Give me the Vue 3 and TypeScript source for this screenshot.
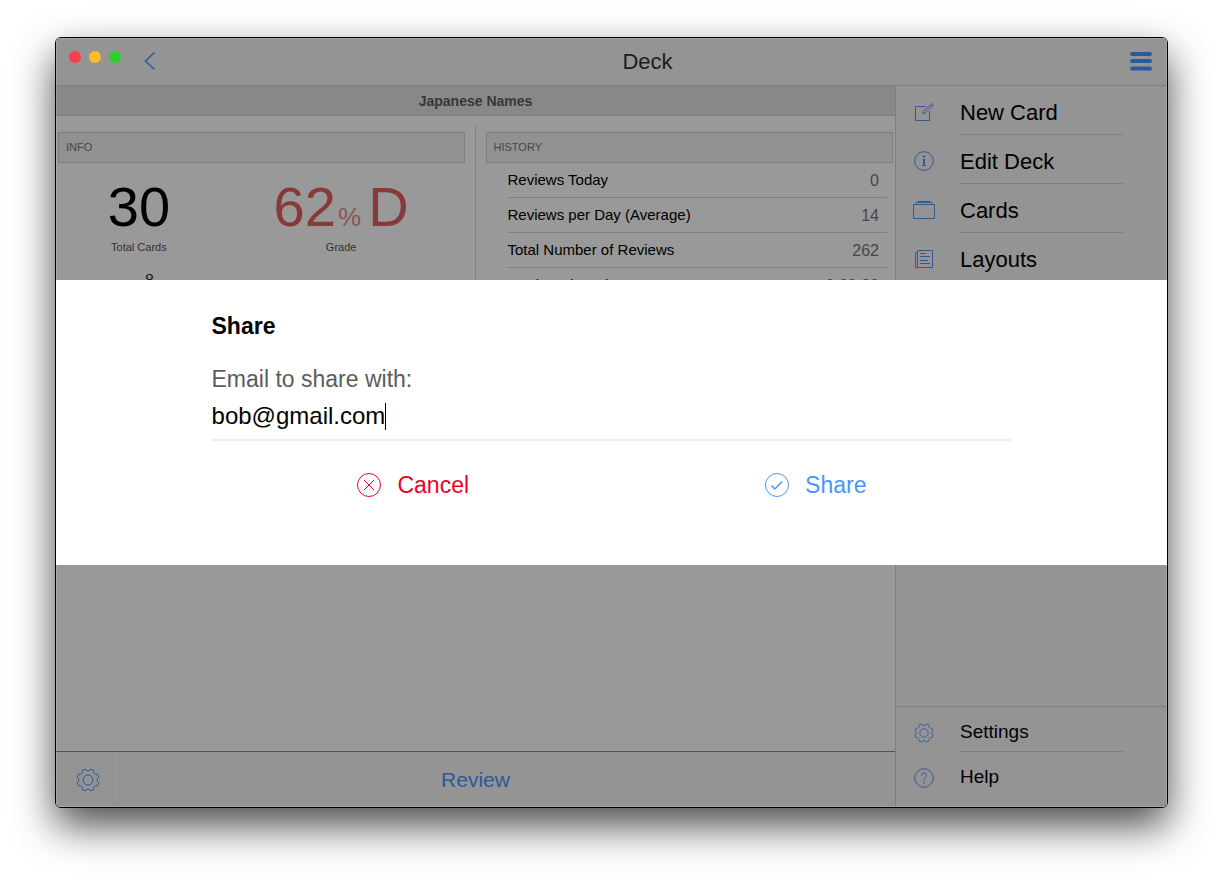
<script setup lang="ts">
import { ref } from 'vue'

interface Stat {
  label: string
  value: string
}

const email = ref('bob@gmail.com')

const history: Stat[] = [
  { label: 'Reviews Today', value: '0' },
  { label: 'Reviews per Day (Average)', value: '14' },
  { label: 'Total Number of Reviews', value: '262' },
  { label: 'Total Review Time', value: '0:28:38' },
]

const actions = [
  { id: 'new', label: 'New Card' },
  { id: 'edit', label: 'Edit Deck' },
  { id: 'cards', label: 'Cards' },
  { id: 'layouts', label: 'Layouts' },
]

const gearPath = (() => {
  const points: string[] = []
  const teeth = 8
  for (let i = 0; i < teeth; i++) {
    const base = ((i + 0.5) * 2 * Math.PI) / teeth - Math.PI / 2
    const at = (r: number, offset: number) =>
      `${(12 + r * Math.cos(base + offset)).toFixed(2)} ${(12 + r * Math.sin(base + offset)).toFixed(2)}`
    const lead = i === 0 ? 'M' : 'L'
    points.push(`${lead}${at(9.4, -0.25)} L${at(11.2, -0.17)}`)
    points.push(`L${at(11.2, 0.17)} L${at(9.4, 0.25)}`)
    points.push(`Q${at(8.6, 0.39)} ${at(9.4, 0.53)}`)
  }
  return points.join(' ') + 'Z'
})()
</script>

<template>
  <div class="page">
    <div class="window">
      <header class="toolbar">
        <div class="toolbar-left">
          <button class="icon-button" aria-label="Back">
            <svg width="12" height="20" viewBox="0 0 12 20">
              <path d="M10.5 1.5 1.5 10l9 8.500" />
            </svg>
          </button>
        </div>
        <h1>Deck</h1>
        <button class="icon-button menu" aria-label="Menu">
          <svg width="22" height="20" viewBox="0 0 22 20">
            <path d="M2 3h18M2 10h18M2 17.500h18" />
          </svg>
        </button>
      </header>

      <div class="body">
        <main>
          <h2 class="deck-name">Japanese Names</h2>
          <div class="columns">
            <section class="info">
              <h3>INFO</h3>
              <div class="figures">
                <div class="figure">
                  <span class="big">30</span>
                  <span class="caption">Total Cards</span>
                </div>
                <div class="figure">
                  <span class="big grade">62<small>% </small>D</span>
                  <span class="caption">Grade</span>
                </div>
              </div>
              <div class="chart-mark">8</div>
            </section>
            <section class="history">
              <h3>HISTORY</h3>
              <dl>
                <div v-for="row in history" :key="row.label" class="stat">
                  <dt>{{ row.label }}</dt>
                  <dd>{{ row.value }}</dd>
                </div>
              </dl>
            </section>
          </div>
          <footer class="bottom-bar">
            <button class="gear" aria-label="Deck settings">
              <svg width="24" height="24" viewBox="0 0 24 24">
                <path :d="gearPath" />
                <circle cx="12" cy="12" r="5" />
              </svg>
            </button>
            <button class="review">Review</button>
          </footer>
        </main>

        <aside>
          <nav>
            <button v-for="item in actions" :key="item.id" class="item">
              <span class="item-icon">
                <svg v-if="item.id === 'new'" width="22" height="22" viewBox="0 0 22 22">
                  <path d="M13 5.500H2.500v14h14V10" />
                  <path d="M9.500 13l1-2.700L19 2.500l1.500 1.500L12 12zM17.500 4 19 5.500" />
                </svg>
                <svg v-else-if="item.id === 'edit'" width="22" height="22" viewBox="0 0 22 22">
                  <circle cx="11" cy="11" r="9.300" />
                  <path class="thick" d="M11 9V15.500" />
                  <path d="M9.500 9.500H11M9 15.500h4" />
                  <circle class="solid" cx="11" cy="6.500" r="1.200" />
                </svg>
                <svg v-else-if="item.id === 'cards'" width="22" height="22" viewBox="0 0 22 22">
                  <path d="M.5 5.500h21v14H.5zM2.500 5 3.500 3.500h15L19.500 5M4.500 2.500h13" />
                </svg>
                <svg v-else width="22" height="22" viewBox="0 0 22 22">
                  <path d="M4.500 2.500h15v17h-17v-15h2zM4.500 4.500v15" />
                  <path d="M7 5.500h6M7 8.500h10M7 12.500h8M7 15.500h10" />
                </svg>
              </span>
              <span class="item-label">{{ item.label }}</span>
            </button>
          </nav>
          <nav class="secondary">
            <button class="item">
              <span class="item-icon">
                <svg width="20" height="20" viewBox="0 0 24 24">
                  <path :d="gearPath" />
                  <circle cx="12" cy="12" r="5" />
                </svg>
              </span>
              <span class="item-label">Settings</span>
            </button>
            <button class="item">
              <span class="item-icon">
                <svg width="22" height="22" viewBox="0 0 22 22">
                  <circle cx="11" cy="11" r="9.300" />
                  <path d="M8.500 8.500C8.500 5 13.500 5 13.500 8.300 13.500 10.500 11 10.500 11 13.500" />
                  <circle class="solid" cx="11" cy="15.800" r="0.800" />
                </svg>
              </span>
              <span class="item-label">Help</span>
            </button>
          </nav>
        </aside>
      </div>

      <div class="backdrop">
        <form class="dialog" role="dialog" aria-labelledby="share-title" @submit.prevent>
          <h2 id="share-title">Share</h2>
          <label for="share-email">Email to share with:</label>
          <div class="field">
            <input id="share-email" v-model="email" type="text" spellcheck="false" />
            <span class="caret" aria-hidden="true"></span>
          </div>
          <div class="choices">
            <button type="button" class="cancel">
              <svg width="26" height="26" viewBox="0 0 26 26">
                <circle cx="13" cy="13" r="11.500" />
                <path d="M8 8l10 10M18 8 8 18" />
              </svg>
              Cancel
            </button>
            <button type="submit" class="confirm">
              <svg width="26" height="26" viewBox="0 0 26 26">
                <circle cx="13" cy="13" r="11.500" />
                <path class="tick" d="M7.500 13.500l3.300 3.500 7.500-7.500" />
              </svg>
              Share
            </button>
          </div>
        </form>
      </div>

      <div class="lights">
        <button class="light close" aria-label="Close"></button>
        <button class="light minimize" aria-label="Minimize"></button>
        <button class="light zoom" aria-label="Zoom"></button>
      </div>
    </div>
  </div>
</template>

<style>
body {
  background: #fff;
}
</style>

<style scoped>
.page,
.page * {
  box-sizing: border-box;
}

.page {
  display: flex;
  min-height: 100vh;
  padding: 37px 55px 73px;
  font-family: 'Liberation Sans', Arial, sans-serif;
  color: #000;
  overflow: hidden;
}

h1,
h2,
h3,
dl,
dd {
  margin: 0;
  font-weight: normal;
}

button {
  padding: 0;
  border: 0;
  background: none;
  font: inherit;
  color: inherit;
}

svg {
  display: block;
  fill: none;
  stroke: currentColor;
  stroke-width: 1;
}

.solid {
  fill: currentColor;
  stroke: none;
}

.thick {
  stroke-width: 2;
}

.tick {
  stroke-width: 1.5;
}

.window {
  position: relative;
  flex: 1;
  display: flex;
  flex-direction: column;
  border: 1px solid #000;
  border-radius: 6px;
  background: #fff;
  overflow: hidden;
  box-shadow: 0 18px 40px rgba(0, 0, 0, 0.7);
}

.toolbar {
  display: flex;
  align-items: center;
  height: 48px;
  background: #f7f7f7;
  border-bottom: 1px solid #d4d4d4;
}

.toolbar-left {
  width: 126px;
  padding-left: 88px;
}

.toolbar h1 {
  flex: 1;
  text-align: center;
  font-size: 22px;
  color: #333;
}

.icon-button {
  display: block;
  padding-bottom: 2px;
  color: #4796ff;
}

.icon-button svg {
  stroke-width: 1.5;
}

.menu {
  width: 54px;
  padding-left: 17px;
}

.menu svg {
  stroke-width: 4;
  stroke-linecap: round;
}

.body {
  flex: 1;
  display: flex;
}

main {
  flex: 1;
  display: flex;
  flex-direction: column;
}

.deck-name {
  height: 30px;
  background: #e3e3e3;
  border-bottom: 1px solid #d4d4d4;
  font-size: 14px;
  font-weight: bold;
  line-height: 30px;
  text-align: center;
  color: #5c5c5c;
}

.columns {
  flex: 1;
  display: grid;
  grid-template-columns: 1fr 1fr;
  align-content: start;
  padding-top: 8px;
}

.info {
  padding: 8px 10px 0 2px;
  border-right: 1px solid #d4d4d4;
}

.history {
  padding: 8px 2px 0 10px;
}

h3 {
  height: 31px;
  padding-left: 7px;
  border: 1px solid #d4d4d4;
  background: #f2f2f2;
  font-size: 11px;
  line-height: 29px;
  color: #777;
}

.figures {
  display: grid;
  grid-template-columns: 2fr 3fr;
  padding-right: 2px;
}

.figure {
  display: flex;
  flex-direction: column;
  align-items: center;
  padding-top: 12px;
}

.big {
  height: 64px;
  font-size: 56px;
  line-height: 64px;
}

.grade {
  color: #e0625f;
}

.grade small {
  padding-left: 2px;
  font-size: 26px;
  line-height: 26px;
  color: #e09391;
}

.caption {
  font-size: 11px;
  line-height: 16px;
  color: #555;
}

.chart-mark {
  padding: 17px 0 0 87px;
  font-size: 16px;
  line-height: 18px;
  color: #333;
}

dl {
  padding: 0 6px 0 22px;
}

.stat {
  display: flex;
  justify-content: space-between;
  height: 35px;
  padding-right: 8px;
  border-bottom: 1px solid #d4d4d4;
}

dt {
  font-size: 15px;
  line-height: 34px;
}

dd {
  font-size: 16px;
  line-height: 36px;
  color: #777;
}

.bottom-bar {
  display: flex;
  height: 56px;
  border-top: 1px solid #4796ff;
  background: #f7f7f7;
  color: #4796ff;
}

.gear {
  display: grid;
  place-items: center;
  width: 64px;
  border-right: 1px solid #eee;
}

.review {
  flex: 1;
  padding-right: 64px;
  font-size: 21px;
}

aside {
  display: flex;
  flex-direction: column;
  justify-content: space-between;
  width: 272px;
  border-left: 1px solid #d4d4d4;
  background: #f7f7f7;
}

.item {
  display: flex;
  width: 100%;
  height: 49px;
  padding-right: 44px;
  text-align: left;
  font-size: 22px;
}

.item-icon {
  display: grid;
  place-items: center;
  width: 64px;
  height: 100%;
  padding: 2px 8px 0 0;
  color: #5a94f0;
}

.item-label {
  flex: 1;
  height: 100%;
  padding-top: 3px;
  border-bottom: 1px solid #d4d4d4;
  line-height: 48px;
}

.secondary {
  padding-bottom: 10px;
  border-top: 1px solid #d4d4d4;
}

.secondary .item {
  height: 45px;
  font-size: 19px;
}

.secondary .item-icon {
  padding-top: 6px;
}

.secondary .item-label {
  line-height: 44px;
}

.secondary .item:last-child .item-label {
  border-bottom: 0;
}

.backdrop {
  position: absolute;
  inset: 0;
  display: flex;
  flex-direction: column;
  justify-content: center;
  background: rgba(0, 0, 0, 0.4);
  box-shadow: inset 0 0 0 1px rgba(255, 255, 255, 0.15);
}

.dialog {
  padding: 32px 14% 56px;
  background: #fff;
}

.dialog h2 {
  font-size: 23px;
  font-weight: bold;
  line-height: 28px;
}

.dialog label {
  display: block;
  margin-top: 25px;
  font-size: 23px;
  line-height: 28px;
  color: #5c5c5c;
}

.field {
  display: flex;
  align-items: center;
  height: 48px;
  border-bottom: 2px solid #e3eefd;
}

.field input {
  field-sizing: content;
  padding: 0;
  border: 0;
  outline: 0;
  background: none;
  font: inherit;
  font-size: 24px;
  color: #000;
  caret-color: transparent;
}

.caret {
  width: 1px;
  height: 27px;
  background: #000;
}

.choices {
  display: grid;
  grid-template-columns: 1fr 1fr;
  margin: 20px -5px 0 0;
}

.choices button {
  display: flex;
  align-items: center;
  justify-content: center;
  gap: 15px;
  height: 48px;
  font-size: 23px;
}

.cancel {
  color: #f00028;
}

.confirm {
  color: #4796ff;
}

.lights {
  position: absolute;
  top: 13px;
  left: 13px;
  display: flex;
  gap: 8px;
}

.light {
  width: 12px;
  height: 12px;
  border-radius: 50%;
}

.close {
  background: #fc4048;
}

.minimize {
  background: #fcbc28;
}

.zoom {
  background: #2fcf2f;
}
</style>
